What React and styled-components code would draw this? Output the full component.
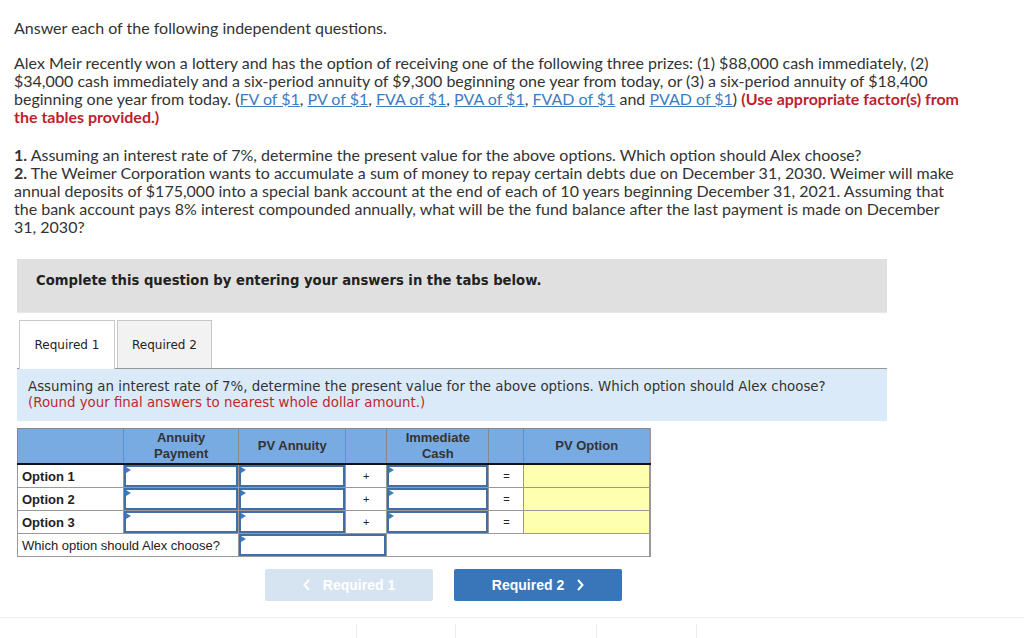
import React from 'react';
import styled, { createGlobalStyle } from 'styled-components';

const Global = createGlobalStyle`
  html, body {
    margin: 0;
    padding: 0;
    background: #fff;
  }
  body {
    font-family: 'Lato', 'Liberation Sans', sans-serif;
    color: #333;
  }
`;

const Page = styled.div`
  width: 1024px;
  height: 638px;
  overflow: hidden;
  position: relative;
`;

const Question = styled.div`
  padding: 19px 0 0 14px;
  width: 948px;
  font-size: 16px;
  line-height: 18px;
  color: #333;

  p {
    margin: 0 0 17px;
  }
  p + p {
    margin-top: 20px;
  }
  p:first-child + p {
    margin-top: 0;
  }
`;

const Link = styled.a`
  color: #3b7cc4;
  text-decoration: underline;
`;

const Warn = styled.strong`
  color: #bf1e2e;
`;

const Work = styled.div`
  margin: 23px 0 0 17px;
  width: 870px;
  font-family: 'DejaVu Sans', Verdana, sans-serif;
`;

const Banner = styled.div`
  background: #e0e0e0;
  height: 54px;
  box-sizing: border-box;
  padding: 14px 19px 0;
  font-size: 13.2px;
  font-weight: bold;
  color: #222;
  line-height: 16px;
  border-bottom: 1px solid #e8e8e8;
`;

const TabStrip = styled.div`
  display: flex;
  gap: 2px;
  margin-top: 7px;
  padding-left: 2px;
  border-bottom: 1px solid #999;
  height: 48px;
`;

const Tab = styled.div`
  width: ${p => p.$w}px;
  box-sizing: border-box;
  border: 1px solid #c8c8c8;
  border-bottom: none;
  background: ${p => (p.$active ? '#fff' : '#f2f2f2')};
  margin-bottom: ${p => (p.$active ? '-1px' : '0')};
  font-size: 12px;
  color: #222;
  display: flex;
  align-items: center;
  justify-content: center;
`;

const Prompt = styled.div`
  background: #daeaf8;
  padding: 10px 11px 8px;
  font-size: 13.35px;
  line-height: 16px;
  color: #333;
  height: 52px;
  box-sizing: border-box;
  white-space: nowrap;

  span {
    color: #c0272d;
  }
`;

const Grid = styled.table`
  margin-top: 7px;
  width: 634px;
  table-layout: fixed;
  border-collapse: collapse;
  font-family: 'Liberation Sans', Arial, sans-serif;
  font-size: 13px;
  color: #222;
  border-right: 2px solid #999;
`;

const Head = styled.th`
  background: #79abe3;
  border: 1px solid #888;
  border-bottom: 2px solid #111;
  height: 34px;
  padding: 0;
  font-size: 13px;
  line-height: 16px;
  color: #333;
  font-weight: bold;
`;

const Cell = styled.td`
  border: 1px solid #999;
  height: 22px;
  padding: 0 ${p => (p.$pad ? '4px' : '0')};
  font-weight: ${p => (p.$bold ? 'bold' : 'normal')};
  text-align: ${p => (p.$center ? 'center' : 'left')};
  background: ${p => p.$bg || '#fff'};
  font-size: ${p => (p.$small ? '11px' : '13px')};
  white-space: nowrap;
`;

const InputCell = styled.td`
  border: 1px solid #999;
  padding: 0;
  height: 22px;
  position: relative;
`;

const Input = styled.div`
  position: absolute;
  inset: 0;
  border: 2px solid #3f6fa6;
  background: #fff;

  &::before {
    content: '';
    position: absolute;
    left: 0;
    top: 0;
    border-left: 5px solid #3b7cc4;
    border-top: 3px solid transparent;
    border-bottom: 3px solid transparent;
  }
`;

const Nav = styled.div`
  display: flex;
  gap: 21px;
  margin: 12px 0 0 248px;
`;

const NavButton = styled.div`
  width: 168px;
  height: 32px;
  border-radius: 2px;
  background: ${p => (p.$disabled ? '#d6e3f1' : '#3875b9')};
  color: #fff;
  font-family: 'Liberation Sans', Arial, sans-serif;
  font-weight: bold;
  font-size: 14px;
  display: flex;
  align-items: center;
  justify-content: center;
  gap: 12px;
`;

const Footer = styled.div`
  position: absolute;
  left: 0;
  right: 0;
  top: 617px;
  bottom: 0;
  border-top: 1px solid #ececec;
  display: flex;
  padding: 6px 0 0 356px;
`;

const Divider = styled.div`
  width: ${p => p.$w}px;
  border-left: 1px solid #ededed;
`;

const Chevron = ({ dir }) => (
  <svg width="8" height="12" viewBox="0 0 8 12">
    <path
      d={dir === 'left' ? 'M6 1 L1.5 6 L6 11' : 'M2 1 L6.5 6 L2 11'}
      fill="none"
      stroke="#fff"
      strokeWidth="2"
    />
  </svg>
);

const rows = ['Option 1', 'Option 2', 'Option 3'];

export default function App() {
  return (
    <Page>
      <Global />
      <Question>
        <p>Answer each of the following independent questions.</p>
        <p>
          Alex Meir recently won a lottery and has the option of receiving one of the following three prizes: (1) $88,000 cash immediately, (2) $34,000 cash immediately and a six-period annuity of $9,300 beginning one year from today, or (3) a six-period annuity of $18,400 beginning one year from today. (<Link>FV of $1</Link>, <Link>PV of $1</Link>, <Link>FVA of $1</Link>, <Link>PVA of $1</Link>, <Link>FVAD of $1</Link> and <Link>PVAD of $1</Link>) <Warn>(Use appropriate factor(s) from the tables provided.)</Warn>
        </p>
        <p>
          <b>1.</b> Assuming an interest rate of 7%, determine the present value for the above options. Which option should Alex choose?
          <br />
          <b>2.</b> The Weimer Corporation wants to accumulate a sum of money to repay certain debts due on December 31, 2030. Weimer will make annual deposits of $175,000 into a special bank account at the end of each of 10 years beginning December 31, 2021. Assuming that the bank account pays 8% interest compounded annually, what will be the fund balance after the last payment is made on December 31, 2030?
        </p>
      </Question>
      <Work>
        <Banner>Complete this question by entering your answers in the tabs below.</Banner>
        <TabStrip>
          <Tab $active $w={96}>Required 1</Tab>
          <Tab $w={95}>Required 2</Tab>
        </TabStrip>
        <Prompt>
          Assuming an interest rate of 7%, determine the present value for the above options. Which option should Alex choose?
          <br />
          <span>(Round your final answers to nearest whole dollar amount.)</span>
        </Prompt>
        <Grid>
          <colgroup>
            <col style={{ width: 106 }} />
            <col style={{ width: 115 }} />
            <col style={{ width: 107 }} />
            <col style={{ width: 41 }} />
            <col style={{ width: 102 }} />
            <col style={{ width: 35 }} />
            <col style={{ width: 126 }} />
          </colgroup>
          <thead>
            <tr>
              <Head />
              <Head>Annuity<br />Payment</Head>
              <Head>PV Annuity</Head>
              <Head />
              <Head>Immediate<br />Cash</Head>
              <Head />
              <Head>PV Option</Head>
            </tr>
          </thead>
          <tbody>
            {rows.map(r => (
              <tr key={r}>
                <Cell $bold $pad>{r}</Cell>
                <InputCell><Input /></InputCell>
                <InputCell><Input /></InputCell>
                <Cell $center $small>+</Cell>
                <InputCell><Input /></InputCell>
                <Cell $center $small>=</Cell>
                <Cell $bg="#ffffb0" />
              </tr>
            ))}
            <tr>
              <Cell $pad colSpan={2}>Which option should Alex choose?</Cell>
              <InputCell colSpan={2}><Input /></InputCell>
              <Cell colSpan={3} />
            </tr>
          </tbody>
        </Grid>
        <Nav>
          <NavButton $disabled><Chevron dir="left" />Required 1</NavButton>
          <NavButton>Required 2<Chevron dir="right" /></NavButton>
        </Nav>
      </Work>
      <Footer>
        <Divider $w={98} />
        <Divider $w={140} />
        <Divider $w={99} />
        <Divider $w={10} />
      </Footer>
    </Page>
  );
}
